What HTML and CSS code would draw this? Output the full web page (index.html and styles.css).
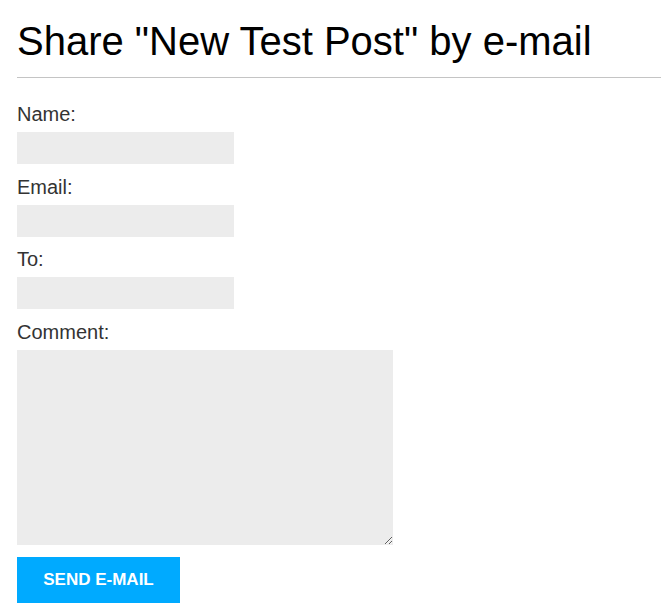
FILE: index.html
```html
<!DOCTYPE html>
<html>
<head>
<meta charset="utf-8">
<link rel="stylesheet" href="styles.css">
</head>
<body>
<div class="page">
  <h1 class="title">Share "New Test Post" by e-mail</h1>
  <hr class="rule">
  <form class="share-form">
    <label class="field-label" for="name">Name:</label>
    <input class="field-input" id="name" type="text">
    <label class="field-label" for="email">Email:</label>
    <input class="field-input" id="email" type="text">
    <label class="field-label" for="to">To:</label>
    <input class="field-input" id="to" type="text">
    <label class="field-label" for="comment">Comment:</label>
    <textarea class="field-text" id="comment"></textarea>
    <button class="send-btn" type="button">SEND E-MAIL</button>
  </form>
</div>
</body>
</html>
```
FILE: styles.css
```css
html, body {
  margin: 0;
  padding: 0;
  background: #fff;
}
.page {
  padding: 19px 0 0 17px;
  font-family: "Liberation Sans", Arial, sans-serif;
}
.title {
  margin: 0;
  font-size: 40px;
  font-weight: normal;
  line-height: 45px;
  color: #000;
}
.rule {
  margin: 13px 0 0 0;
  border: 0;
  border-top: 1px solid #c4c4c4;
  height: 0;
}
.share-form {
  display: flex;
  flex-direction: column;
  align-items: flex-start;
  padding-top: 24px;
}
.field-label {
  font-size: 20px;
  line-height: 25px;
  color: #333;
  margin-bottom: 5px;
}
.field-input {
  width: 217px;
  height: 32px;
  box-sizing: border-box;
  border: 0;
  background: #ececec;
  margin: 0 0 10.5px 0;
  padding: 0 8px;
}
.field-text {
  width: 376px;
  height: 195px;
  box-sizing: border-box;
  border: 0;
  background: #ececec;
  margin: 0 0 12px 0;
  padding: 8px;
}
.send-btn {
  width: 163px;
  height: 46px;
  border: 0;
  background: #00aaff;
  color: #fff;
  font-family: "Liberation Sans", Arial, sans-serif;
  font-weight: bold;
  font-size: 17px;
  padding: 0;
}
```
